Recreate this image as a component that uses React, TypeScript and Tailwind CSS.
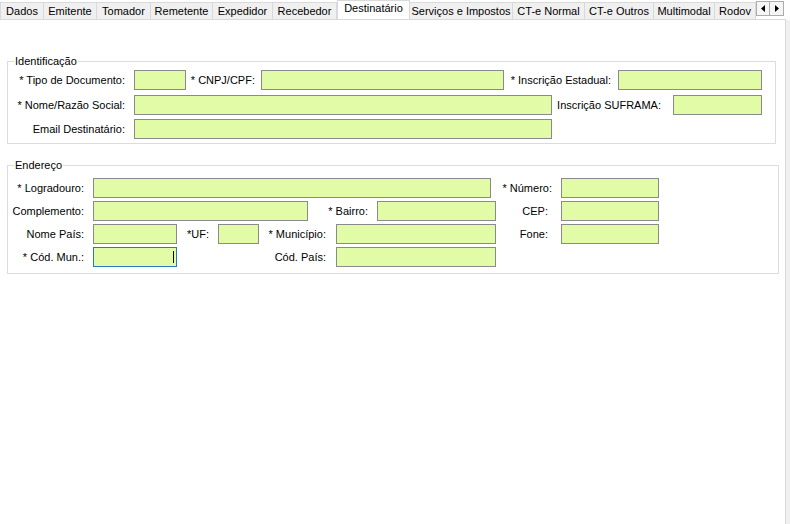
import type { ReactNode } from "react";

type Tab = { label: string; w: number; active?: boolean };

const tabs: Tab[] = [
  { label: "Dados", w: 44 },
  { label: "Emitente", w: 53 },
  { label: "Tomador", w: 54 },
  { label: "Remetente", w: 62 },
  { label: "Expedidor", w: 60 },
  { label: "Recebedor", w: 64 },
  { label: "Destinatário", w: 73, active: true },
  { label: "Serviços e Impostos", w: 103 },
  { label: "CT-e Normal", w: 72 },
  { label: "CT-e Outros", w: 69 },
  { label: "Multimodal", w: 61 },
  { label: "Rodov", w: 41 },
];

function Label({ w, pr, children }: { w: number; pr: number; children: ReactNode }) {
  return (
    <div className="shrink-0 text-right whitespace-nowrap leading-[13px]" style={{ width: w, paddingRight: pr }}>
      {children}
    </div>
  );
}

function Field({ w, focused }: { w: number; focused?: boolean }) {
  return (
    <div
      className={
        "relative shrink-0 h-[20px] bg-[#e2fba6] border " +
        (focused ? "border-[#2a78c8]" : "border-[#8a8a8a]")
      }
      style={{ width: w }}
    >
      {focused && <span className="absolute right-[2px] top-[3px] w-px h-[12px] bg-black" />}
    </div>
  );
}

function Row({ children }: { children: ReactNode }) {
  return <div className="flex items-center h-[20px]">{children}</div>;
}

export default function App() {
  return (
    <div className="w-[790px] h-[524px] bg-white flex flex-col overflow-hidden font-['Liberation_Sans',Arial,sans-serif] text-[11px] text-black">
      {/* abas */}
      <div className="flex h-[20px] w-[786px] border-b border-[#d9d9d9]">
        <div className="flex w-[756px] overflow-hidden">
          {tabs.map((t) =>
            t.active ? (
              <div
                key={t.label}
                className="shrink-0 h-[20px] -mb-px bg-white border border-b-0 border-[#d9d9d9] flex justify-center pt-[1px] leading-[13px] z-10"
                style={{ width: t.w }}
              >
                {t.label}
              </div>
            ) : (
              <div
                key={t.label}
                className="shrink-0 self-end h-[17px] bg-[#f0f0f0] border border-b-0 border-l-0 first:border-l border-[#d9d9d9] flex justify-center pt-[2px] leading-[13px] whitespace-nowrap"
                style={{ width: t.w }}
              >
                {t.label}
              </div>
            )
          )}
        </div>
        <div className="flex items-start pt-[1px]">
          <div className="w-[14px] h-[15px] border border-[#adadad] bg-[#f6f6f6] flex items-center justify-center">
            <svg width="4" height="7" viewBox="0 0 4 7">
              <path d="M4 0 L0 3.5 L4 7 Z" fill="#000" />
            </svg>
          </div>
          <div className="w-[14px] h-[15px] border border-l-0 border-[#adadad] bg-[#f6f6f6] flex items-center justify-center">
            <svg width="4" height="7" viewBox="0 0 4 7">
              <path d="M0 0 L4 3.5 L0 7 Z" fill="#000" />
            </svg>
          </div>
        </div>
      </div>

      <div className="flex flex-1">
        <div className="w-[786px] border-r border-[#d9d9d9] pl-[7px]">
          <fieldset className="mt-[35px] w-[769px] border border-[#dcdcdc] pt-[2px] pb-[4px]">
            <legend className="ml-[6px] px-[1px] leading-[13px]">Identificação</legend>
            <div className="flex flex-col">
              <Row>
                <Label w={126} pr={9}>* Tipo de Documento:</Label>
                <Field w={52} />
                <Label w={75} pr={6}>* CNPJ/CPF:</Label>
                <Field w={243} />
                <Label w={114} pr={7}>* Inscrição Estadual:</Label>
                <Field w={144} />
              </Row>
              <div className="h-[5px]" />
              <Row>
                <Label w={126} pr={9}>* Nome/Razão Social:</Label>
                <Field w={418} />
                <Label w={121} pr={12}>Inscrição SUFRAMA:</Label>
                <Field w={89} />
              </Row>
              <div className="h-[4px]" />
              <Row>
                <Label w={126} pr={9}>Email Destinatário:</Label>
                <Field w={418} />
              </Row>
            </div>
          </fieldset>

          <fieldset className="mt-[15px] w-[772px] border border-[#dcdcdc] pt-[6px] pb-[6px]">
            <legend className="ml-[6px] px-[1px] leading-[13px]">Endereço</legend>
            <div className="flex flex-col gap-[3px]">
              <Row>
                <Label w={85} pr={9}>* Logradouro:</Label>
                <Field w={398} />
                <Label w={70} pr={9}>* Número:</Label>
                <Field w={98} />
              </Row>
              <Row>
                <Label w={85} pr={9}>Complemento:</Label>
                <Field w={215} />
                <Label w={69} pr={9}>* Bairro:</Label>
                <Field w={119} />
                <Label w={65} pr={13}>CEP:</Label>
                <Field w={98} />
              </Row>
              <Row>
                <Label w={85} pr={9}>Nome País:</Label>
                <Field w={84} />
                <Label w={41} pr={9}>*UF:</Label>
                <Field w={41} />
                <Label w={77} pr={10}>* Município:</Label>
                <Field w={160} />
                <Label w={65} pr={13}>Fone:</Label>
                <Field w={98} />
              </Row>
              <Row>
                <Label w={85} pr={9}>* Cód. Mun.:</Label>
                <Field w={84} focused />
                <Label w={159} pr={10}>Cód. País:</Label>
                <Field w={160} />
              </Row>
            </div>
          </fieldset>
        </div>
        <div className="flex-1 bg-[#f0f0f0]" />
      </div>
    </div>
  );
}
